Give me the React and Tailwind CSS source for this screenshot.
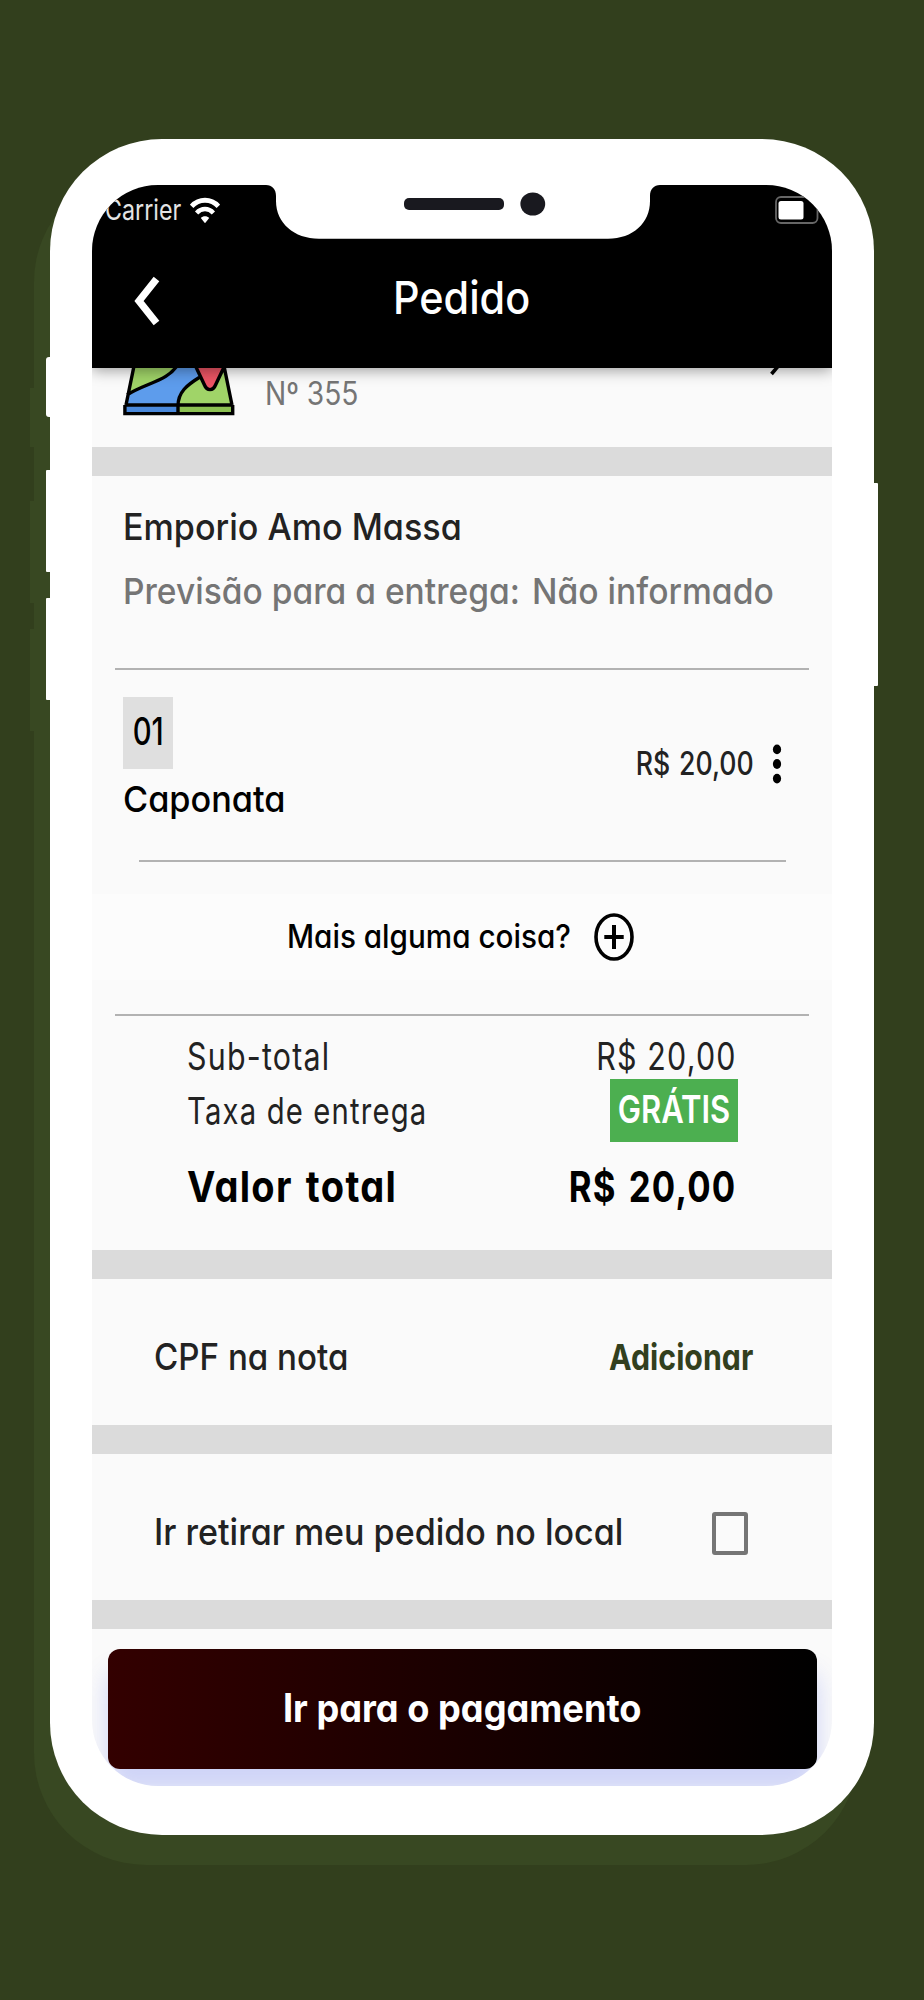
const totals = [
  { label: 'Sub-total', labelClass: 'text-[38px] scale-x-[0.8]', height: 'h-[46px]', value: 'R$ 20,00' },
  { label: 'Taxa de entrega', labelClass: 'text-[37px] scale-x-[0.79]', height: 'h-[63px]', free: true },
];

const Text = ({ className, children }) => (
  <span className={`inline-block shrink-0 whitespace-pre leading-none ${className}`}>{children}</span>
);

const Separator = () => <div className="h-[29px] shrink-0 bg-[#dbdbdb]" />;

const Divider = ({ className }) => <div className={`h-[2px] shrink-0 bg-[#b2b2b2] ${className}`} />;

const WifiIcon = () => (
  <svg width="30" height="27" viewBox="0 0 30 27" fill="none">
    <path d="M1.6 9.3C9 1.2 21 1.2 28.4 9.3" stroke="#fff" strokeWidth="4.8" />
    <path d="M6.6 15.9c4.8-5.2 12-5.2 16.8 0" stroke="#fff" strokeWidth="4.4" />
    <path d="M15 26.3l-4.2-5.2c2-2.6 6.4-2.6 8.4 0z" fill="#fff" />
  </svg>
);

const BatteryIcon = () => (
  <svg width="44" height="28" viewBox="0 0 44 28" fill="none">
    <rect x="1" y="1" width="41.5" height="26" rx="5" stroke="#666" strokeWidth="1.8" />
    <rect x="3.5" y="5" width="25" height="18.5" rx="2.5" fill="#fff" />
  </svg>
);

const MapIcon = () => (
  <svg width="112" height="48" viewBox="0 0 112 48">
    <path d="M11 -2H101L109 38H3z" fill="#a0d468" />
    <path d="M55 -4C46 13 22 15 4 27L3 38H55C55 24 64 17 76 9L71 -4z" fill="#5d9cec" />
    <path d="M2 37H55V46H2z" fill="#4a89dc" />
    <path d="M55 37H110V46H55z" fill="#8cc152" />
    <path d="M72 -3L81 16C84 23.5 90 23.5 93 16L102 -3" fill="#ed5565" />
    <path
      d="M11 -2L3 37M101 -2L109 37M55 -4C46 13 22 15 4 27M77 9C64 17 55 24 55 38V46M72 -3L81 16C84 23.5 90 23.5 93 16L102 -3M2 37H110"
      fill="none"
      stroke="#000"
      strokeWidth="3.4"
    />
    <path d="M1.9 37V45.6H109.7V37" fill="none" stroke="#000" strokeWidth="3.4" />
  </svg>
);

const Notch = () => (
  <svg className="absolute left-[174px] top-0 z-20" width="396" height="54" viewBox="0 0 396 54">
    <path d="M0 0C6 0 10 4 10 11V16C10 38 28 53.7 53 53.7H342C367 53.7 384 38 384 16V11C384 4 388 0 394 0z" fill="#fff" />
    <rect x="138" y="13" width="100" height="12" rx="5" fill="#19191f" />
    <ellipse cx="266.8" cy="19" rx="12.4" ry="11.6" fill="#19191f" />
  </svg>
);

const Header = () => (
  <header className="relative z-10 h-[183px] shrink-0 bg-black text-white shadow-[0_2px_14px_rgba(0,0,0,0.4)]">
    <div className="flex h-[50px] items-center justify-between pl-[13px] pr-[13px]">
      <div className="flex items-center">
        <Text className="w-[85px] origin-left scale-x-[0.83] text-[28px] text-[#e4e4e4] [font-feature-settings:normal]">Carrier</Text>
        <WifiIcon />
      </div>
      <BatteryIcon />
    </div>
    <div className="grid h-[125px] grid-cols-[1fr_auto_1fr] items-center">
      <svg className="ml-[41px] mt-[7px]" width="28" height="50" viewBox="0 0 28 50" fill="none">
        <path d="M23.5 3L6 25L23.5 47" stroke="#fff" strokeWidth="7.2" />
      </svg>
      <Text className="scale-x-[0.92] text-[45px] font-medium">Pedido</Text>
    </div>
  </header>
);

const Address = () => (
  <section className="flex h-[79px] shrink-0 items-start pl-[31px]">
    <MapIcon />
    <div className="flex h-[51px] items-center pl-[30px]">
      <Text className="origin-left scale-x-[0.88] text-[32px] text-[#757575] [font-feature-settings:normal]">Nº 355</Text>
    </div>
    <svg className="ml-auto mr-[50px]" width="14" height="10" viewBox="0 0 14 10">
      <path d="M3.5 6L12 -4" stroke="#000" strokeWidth="3.6" />
    </svg>
  </section>
);

const Store = () => (
  <section className="h-[192px] shrink-0 pl-[31px] pt-[18px]">
    <div className="flex h-16 items-center">
      <Text className="origin-left scale-x-[0.922] text-[37px] font-medium text-[#222]">Emporio Amo Massa</Text>
    </div>
    <div className="flex h-[66px] items-center text-[36px] font-medium text-[#757575]">
      <Text className="w-[409px] origin-left scale-x-[0.932]">Previsão para a entrega:</Text>
      <Text className="origin-left scale-x-[0.935]">Não informado</Text>
    </div>
  </section>
);

const Item = () => (
  <section className="flex h-[190px] shrink-0 items-start pl-[31px] pr-[50px] pt-[27px]">
    <div>
      <div className="flex h-[72px] w-[50px] items-center justify-center bg-[#dfdfdf] pb-1">
        <Text className="scale-x-[0.77] text-[38px] font-medium">01</Text>
      </div>
      <div className="flex h-[60px] items-center">
        <Text className="origin-left scale-x-[0.952] text-[36px] font-medium">Caponata</Text>
      </div>
    </div>
    <div className="ml-auto flex h-[133px] items-center">
      <Text className="origin-right scale-x-[0.832] text-[32px] font-medium text-[#222] [word-spacing:2px]">R$ 20,00</Text>
      <svg className="ml-[17px] mr-[-1px]" width="12" height="40" viewBox="0 0 12 40">
        <ellipse cx="6" cy="5.4" rx="4.1" ry="4.9" />
        <ellipse cx="6" cy="20" rx="4.1" ry="4.9" />
        <ellipse cx="6" cy="34.6" rx="4.1" ry="4.9" />
      </svg>
    </div>
  </section>
);

const AddMore = () => (
  <section className="h-[152px] shrink-0 pt-8">
    <div className="flex h-[86px] items-center bg-[#fcfcfc] pl-[195px]">
      <Text className="w-[307px] origin-left scale-x-[0.927] text-[32px] font-medium">Mais alguma coisa?</Text>
      <svg width="40" height="48" viewBox="0 0 40 48" fill="none" stroke="#000">
        <ellipse cx="20" cy="24" rx="18" ry="22" strokeWidth="3.6" />
        <path d="M10.3 24H29.7M20 12V36" strokeWidth="4" />
      </svg>
    </div>
  </section>
);

const Totals = () => (
  <section className="h-[234px] shrink-0 pl-[95px] pr-[94px] pt-[17px]">
    {totals.map((row) => (
      <div key={row.label} className={`flex items-center justify-between ${row.height}`}>
        <Text className={`origin-left tracking-[1.5px] text-[#222] [font-feature-settings:normal] ${row.labelClass}`}>
          {row.label}
        </Text>
        {row.free ? (
          <div className="flex h-[63px] w-[128px] items-center justify-center bg-[#4caf50] pb-[3px]">
            <Text className="scale-x-[0.815] text-[38px] font-semibold text-white">GRÁTIS</Text>
          </div>
        ) : (
          <Text className="mr-px origin-right scale-x-[0.8] text-[38px] tracking-[1.5px] text-[#222]">{row.value}</Text>
        )}
      </div>
    ))}
    <div className="flex h-[88px] items-center justify-between text-[43px] font-bold tracking-[1.5px]">
      <Text className="origin-left scale-x-[0.885] [word-spacing:3px]">Valor total</Text>
      <Text className="mr-[2px] origin-right scale-x-[0.808] [word-spacing:3px]">R$ 20,00</Text>
    </div>
  </section>
);

const App = () => {
  return (
    <main className="relative h-[2000px] w-[924px] overflow-hidden bg-[#323f1d] pl-[50px] pt-[139px] font-['Inter','Liberation_Sans',sans-serif] text-black [font-feature-settings:'cv11']">
      {/* flat shadow cast behind the device */}
      <div className="absolute left-[34px] top-[170px] h-[1695px] w-[824px] rounded-[112px] bg-[#384822]" />
      <div className="absolute left-[30px] top-[388px] h-[59px] w-1 bg-[#384822]" />
      <div className="absolute left-[30px] top-[501px] h-[102px] w-1 bg-[#384822]" />
      <div className="absolute left-[30px] top-[629px] h-[102px] w-1 bg-[#384822]" />

      {/* side buttons */}
      <div className="absolute left-[46px] top-[357px] h-[60px] w-2 rounded-l-[3px] bg-white" />
      <div className="absolute left-[46px] top-[470px] h-[102px] w-2 rounded-l-[1px] bg-white" />
      <div className="absolute left-[46px] top-[598px] h-[102px] w-2 rounded-l-[1px] bg-white" />
      <div className="absolute left-[870px] top-[483px] h-[203px] w-2 rounded-r-[1px] bg-white" />

      <div className="relative h-[1696px] w-[824px] rounded-[112px] bg-white px-[42px] pt-[46px]">
        <div className="relative flex h-[1601px] w-[740px] flex-col overflow-hidden rounded-[66px] bg-[#fafafa]">
          <Header />
          <Address />
          <Separator />
          <Store />
          <Divider className="ml-[23px] mr-[23px]" />
          <Item />
          <Divider className="ml-[47px] mr-[46px]" />
          <AddMore />
          <Divider className="ml-[23px] mr-[23px]" />
          <Totals />
          <Separator />
          <section className="flex h-[146px] shrink-0 items-center justify-between pl-[62px] pr-[79px] pt-[9px]">
            <Text className="origin-left scale-x-[0.895] text-[37px] font-medium text-[#222]">CPF na nota</Text>
            <Text className="origin-right scale-x-[0.842] text-[36px] font-bold text-[#323f1d]">Adicionar</Text>
          </section>
          <Separator />
          <section className="flex h-[146px] shrink-0 items-center justify-between pl-[62px] pr-[84px] pt-[10px]">
            <Text className="origin-left scale-x-[0.932] text-[36.5px] font-medium text-[#222]">Ir retirar meu pedido no local</Text>
            <div className="mt-[3px] h-[43px] w-9 shrink-0 rounded-[3px] border-4 border-[#757575]" />
          </section>
          <Separator />
          <div className="px-[15.5px] pt-5">
            <button className="flex h-[120px] w-full items-center justify-center rounded-[12px] bg-[linear-gradient(90deg,#330000,#000000)] pb-1 text-white shadow-[0_24px_24px_rgba(80,100,240,0.25)]">
              <Text className="scale-x-[0.928] text-[39px] font-bold">Ir para o pagamento</Text>
            </button>
          </div>
          <Notch />
        </div>
      </div>
    </main>
  );
};

export default App;
